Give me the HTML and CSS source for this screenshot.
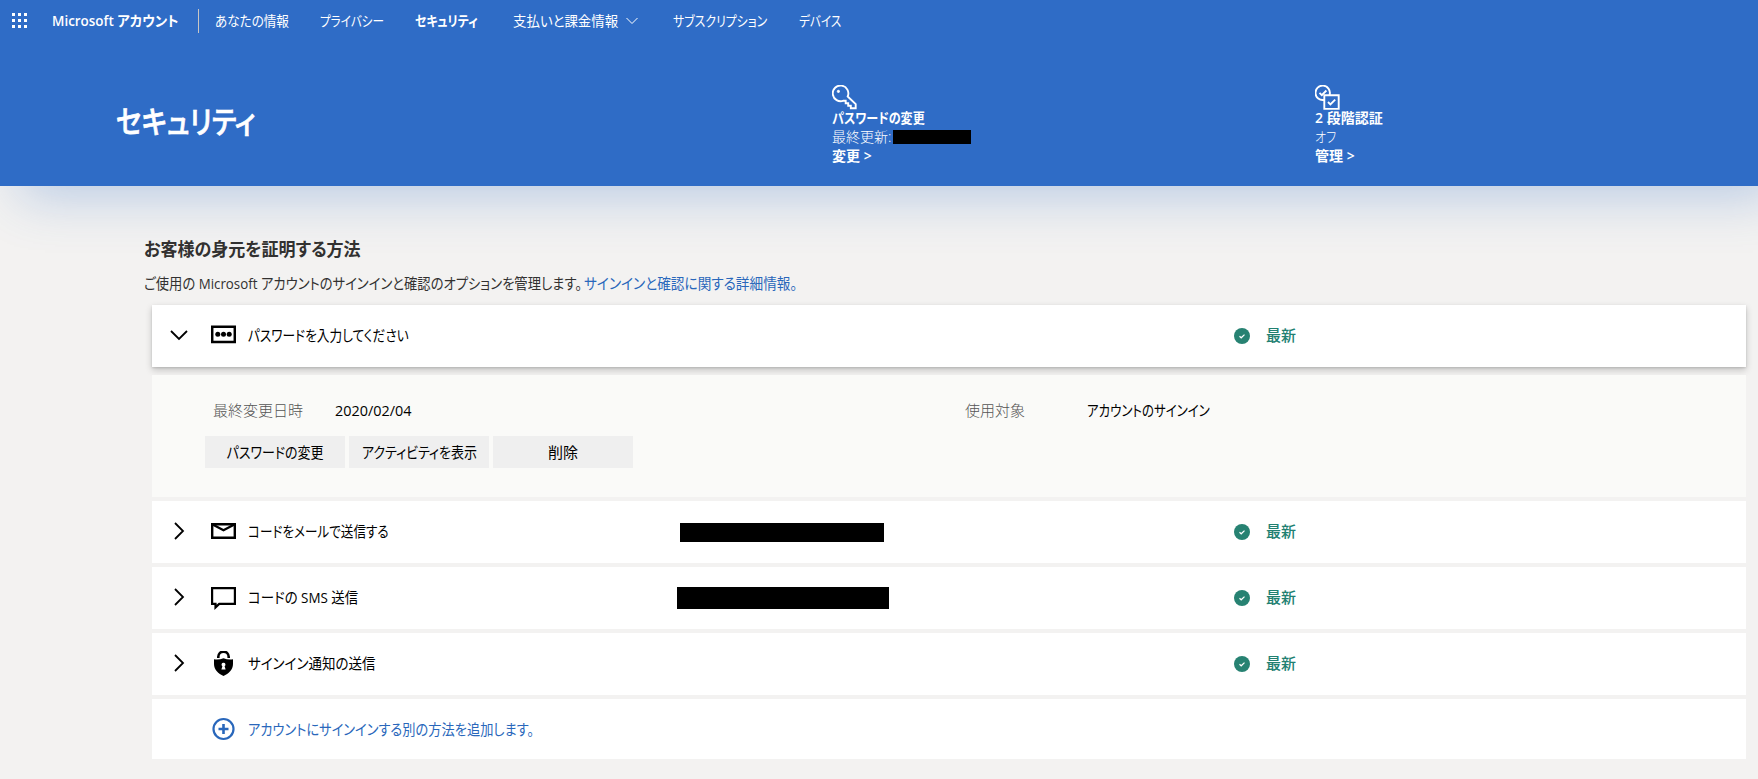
FILE: index.html
```
<!DOCTYPE html>
<html lang="ja">
<head>
  <meta charset="UTF-8" />
  <title>Microsoft アカウント | セキュリティ</title>
  <link rel="stylesheet" href="styles.css">
</head>
<body>
  <header class="header">
    <nav class="nav">
      <svg class="waffle" width="16" height="16" viewBox="0 0 16 16" fill="#fff">
        <path d="M0 0h3v3H0zM6 0h3v3H6zM12 0h3v3h-3zM0 6h3v3H0zM6 6h3v3H6zM12 6h3v3h-3zM0 12h3v3H0zM6 12h3v3H6zM12 12h3v3h-3z" />
      </svg>
      <div class="brand"><span class="t-brand">Microsoft アカウント</span></div>
      <div class="nav-item info"><span>あなたの情報</span></div>
      <div class="nav-item privacy"><span>プライバシー</span></div>
      <div class="nav-item security active"><span>セキュリティ</span></div>
      <div class="nav-item payment">
        <span>支払いと課金情報</span>
        <svg width="12" height="8" viewBox="0 0 12 8" fill="none" stroke="#fff"><path d="M.5 1 6 6.5 11.5 1" /></svg>
      </div>
      <div class="nav-item subs"><span>サブスクリプション</span></div>
      <div class="nav-item device"><span>デバイス</span></div>
    </nav>

    <div class="hero">
      <h1><span class="t-title">セキュリティ</span></h1>
      <div class="hero-card">
        <svg width="25" height="25" viewBox="0 0 25 25" fill="none" stroke="#fff" stroke-width="1.9">
          <path d="M15.7 11.5a7.8 7.8 0 1 0-4.2 4.1l2.2.1v2.5h2.5v2.5h2.6v2.6h4.9v-4.2z" />
          <circle cx="6.4" cy="6.4" r="1.1" fill="#fff" stroke-width="1" />
        </svg>
        <strong class="t-change">パスワードの変更</strong>
        <span class="line"><span class="t-updated">最終更新:</span><span class="redacted small"></span></span>
        <strong>変更 &gt;</strong>
      </div>
      <div class="hero-card">
        <svg width="25" height="25" viewBox="0 0 25 25" fill="none" stroke="#fff" stroke-width="1.9">
          <path d="M9 14.9a7.2 7.2 0 1 1 5.7-5.5M9.3 10.3h14.4v13.6H9.3z" />
          <path d="M4.5 7.8l2.3 2.3 4.6-4.6M13 17l2.4 2.4 4.8-4.8" />
        </svg>
        <strong>2 段階認証</strong>
        <span class="line"><span class="t-off">オフ</span></span>
        <strong>管理 &gt;</strong>
      </div>
    </div>
  </header>

  <main class="main">
    <h2><span class="t-heading">お客様の身元を証明する方法</span></h2>
    <p class="intro"><span class="t-intro">ご使用の Microsoft アカウントのサインインと確認のオプションを管理します。</span><a class="t-more">サインインと確認に関する詳細情報。</a></p>

    <div class="rows">
      <div class="row open">
        <svg class="chevron" width="18" height="18" viewBox="0 0 18 18"><path d="M1 5l8 8 8-8" /></svg>
        <svg class="icon" width="25" height="24" viewBox="0 0 25 24">
          <path d="M1.2 2.7h22.6v15.2H1.2z" fill="none" stroke="#000" stroke-width="2.5" />
          <circle cx="6.8" cy="10.3" r="2.5" /><circle cx="12.5" cy="10.3" r="2.5" /><circle cx="18.2" cy="10.3" r="2.5" />
        </svg>
        <div class="name"><span class="t-pass">パスワードを入力してください</span></div>
        <div class="value"></div>
        <div class="status"><svg width="16" height="16" viewBox="0 0 16 16"><circle cx="8" cy="8" r="8" /><path d="M5.5 8.2l1.7 1.6 3.3-3.2" /></svg><span>最新</span></div>
      </div>

      <div class="detail">
        <div class="facts">
          <span class="label">最終変更日時</span>
          <span class="t-date">2020/02/04</span>
          <span class="label">使用対象</span>
          <span class="t-use">アカウントのサインイン</span>
        </div>
        <div class="actions">
          <button><span class="t-btn1">パスワードの変更</span></button>
          <button><span class="t-btn2">アクティビティを表示</span></button>
          <button><span>削除</span></button>
        </div>
      </div>

      <div class="row">
        <svg class="chevron" width="18" height="18" viewBox="0 0 18 18"><path d="M5 1l8 8-8 8" /></svg>
        <svg class="icon" width="25" height="24" viewBox="0 0 25 24" fill="none" stroke="#000" stroke-width="2.4">
          <path d="M1.2 4.2h22.6v13.6H1.2z" /><path d="M1.2 4.2l11.3 6 11.3-6" />
        </svg>
        <div class="name"><span class="t-mail">コードをメールで送信する</span></div>
        <div class="value"><span class="redacted mail"></span></div>
        <div class="status"><svg width="16" height="16" viewBox="0 0 16 16"><circle cx="8" cy="8" r="8" /><path d="M5.5 8.2l1.7 1.6 3.3-3.2" /></svg><span>最新</span></div>
      </div>

      <div class="row">
        <svg class="chevron" width="18" height="18" viewBox="0 0 18 18"><path d="M5 1l8 8-8 8" /></svg>
        <svg class="icon" width="25" height="24" viewBox="0 0 25 24" fill="none" stroke="#000" stroke-width="2.2">
          <path d="M1.1 2.1h22.8v15.8H8.2l-3.7 3.5v-3.5H1.1z" />
        </svg>
        <div class="name"><span class="t-sms">コードの SMS 送信</span></div>
        <div class="value"><span class="redacted phone"></span></div>
        <div class="status"><svg width="16" height="16" viewBox="0 0 16 16"><circle cx="8" cy="8" r="8" /><path d="M5.5 8.2l1.7 1.6 3.3-3.2" /></svg><span>最新</span></div>
      </div>

      <div class="row">
        <svg class="chevron" width="18" height="18" viewBox="0 0 18 18"><path d="M5 1l8 8-8 8" /></svg>
        <svg class="icon" width="25" height="26" viewBox="0 0 25 26">
          <path d="M7.3 7V5.800a5.200 5.200 0 0 1 10.400 0V7" fill="none" stroke="#000" stroke-width="2.6" />
          <path d="M12.5 7.2c3 1.3 6.2 1.6 9.5 1.1v4.700c0 5.800-4.400 9.800-9.500 12-5.100-2.200-9.500-6.200-9.500-12V8.300c3.300.5 6.500.2 9.500-1.100z" />
          <path d="M12.5 11.7a1.900 1.900 0 0 1 1.100 3.500l1 3.300h-4.200l1-3.300a1.900 1.900 0 0 1 1.100-3.500z" fill="#fff" />
        </svg>
        <div class="name"><span class="t-notify">サインイン通知の送信</span></div>
        <div class="value"></div>
        <div class="status"><svg width="16" height="16" viewBox="0 0 16 16"><circle cx="8" cy="8" r="8" /><path d="M5.5 8.2l1.7 1.6 3.3-3.2" /></svg><span>最新</span></div>
      </div>

      <div class="row add">
        <svg class="icon" width="25" height="24" viewBox="0 0 25 24" fill="none" stroke="#2967bb" stroke-width="2.2">
          <circle cx="12.5" cy="12" r="10" /><path d="M7.5 12h10M12.5 7v10" stroke-width="2.6" />
        </svg>
        <div class="name"><span class="t-add">アカウントにサインインする別の方法を追加します。</span></div>
      </div>
    </div>
  </main>
</body>
</html>
```
FILE: styles.css
```
* {
  box-sizing: border-box;
}

body {
  margin: 0;
  height: 779px;
  overflow: hidden;
  background: #f3f2f1;
  color: #000;
  font-family: "Open Sans", "Noto Sans CJK JP", sans-serif;
  font-size: 15px;
  font-feature-settings: "palt";
  line-height: 20px;
  white-space: nowrap;
}

[class^="t-"],
.nav-item > span {
  display: inline-block;
  width: max-content;
  transform-origin: left center;
}

.t-brand { transform: scaleX(0.96); }
.info > span { transform: scaleX(0.9); }
.privacy > span { transform: scaleX(0.83); }
.security > span { transform: scaleX(0.85); }
.payment > span { transform: scaleX(0.96); }
.subs > span { transform: scaleX(0.85); }
.device > span { transform: scaleX(0.83); }
.t-title { transform: scaleX(0.87); }
.t-change { transform: scaleX(0.86); }
.t-off { transform: scaleX(0.86); }
.t-heading { transform: scaleX(0.945); }
.t-intro { transform: scaleX(0.888); }
.t-more { transform: scaleX(0.91); }
.t-pass { transform: scaleX(0.845); }
.t-date { transform: scaleX(0.96); }
.t-use { transform: scaleX(0.83); }
.t-mail { transform: scaleX(0.84); }
.t-sms { transform: scaleX(0.895); }
.t-notify { transform: scaleX(0.9); }
.t-add { transform: scaleX(0.882); }

.header {
  height: 186px;
  background: #2f6cc6;
  color: #fff;
  box-shadow: 20px 10px 50px rgba(47, 108, 198, 0.3);
}

.nav {
  display: flex;
  align-items: center;
  height: 42px;
  padding-left: 12px;
  font-size: 14px;
}

.waffle {
  margin-right: 24px;
}

.brand {
  width: 147px;
  height: 24px;
  line-height: 24px;
  margin-right: 16px;
  border-right: 1px solid #c8c6c4;
  font-weight: 600;
}

.nav-item {
  display: flex;
  align-items: center;
  gap: 3px;
}

.info { width: 105px; }
.privacy { width: 95px; }
.security { width: 98px; }
.payment { width: 160px; }
.payment > span { width: 110px; }
.subs { width: 126px; }

.active {
  font-weight: 600;
}

.hero {
  display: grid;
  grid-template-columns: 716px 483px 1fr;
  padding: 43px 0 0 116px;
  font-size: 14px;
  line-height: 19px;
}

.hero h1 {
  margin: 16px 0 0;
  font-size: 31px;
  font-weight: 500;
  line-height: 40px;
  -webkit-text-stroke: 0.7px #fff;
}

.hero-card {
  display: flex;
  flex-direction: column;
  align-items: flex-start;
}

.hero-card svg {
  margin-bottom: -2px;
}

.hero-card strong {
  font-weight: 600;
}

.line {
  display: flex;
  align-items: center;
  font-weight: 300;
}

.line .t-updated {
  width: 61px;
}

.redacted {
  display: block;
  background: #000;
}

.small { width: 78px; height: 14px; }
.mail { width: 204px; height: 19px; margin-left: 2px; }
.phone { width: 212px; height: 22px; margin-left: -1px; }

.main {
  padding: 51px 12px 0 144px;
}

h2 {
  margin: 0;
  font-size: 18px;
  font-weight: 600;
  line-height: 24px;
  color: #323130;
}

.intro {
  display: flex;
  margin: 12px 0;
  color: #323130;
}

.intro a {
  color: #2967bb;
}

.intro .t-intro {
  width: 491px;
  margin-right: -51px;
}

.rows {
  display: flex;
  flex-direction: column;
  gap: 4px;
  margin-left: 8px;
}

.row {
  display: flex;
  align-items: center;
  height: 62px;
  padding-left: 18px;
  background: #fff;
}

.row.open {
  margin-bottom: 4px;
  box-shadow: 0 3px 7px rgba(0, 0, 0, 0.2), 0 1px 2px rgba(0, 0, 0, 0.12);
}

.chevron {
  margin: 0 23px 2px 0;
  fill: none;
  stroke: #000;
  stroke-width: 1.8;
}

.icon {
  flex: none;
  margin-right: 12px;
}

.name {
  width: 430px;
  padding-bottom: 2px;
}

.value {
  width: 556px;
}

.status {
  display: flex;
  align-items: center;
  gap: 16px;
  color: #218071;
  font-weight: 500;
}

.status span {
  padding-bottom: 2px;
}

.status circle {
  fill: #278272;
}

.status path {
  fill: none;
  stroke: #fff;
  stroke-width: 1.2;
}

.detail {
  height: 122px;
  padding: 25px 0 0 53px;
  background: #fafaf8;
}

.facts {
  display: grid;
  grid-template-columns: 122px 630px 122px 1fr;
  padding-left: 8px;
}

.label {
  color: #555;
  font-weight: 300;
}

.actions {
  display: flex;
  gap: 4px;
  margin-top: 16px;
}

button {
  display: flex;
  align-items: center;
  justify-content: center;
  width: 140px;
  height: 32px;
  padding: 0;
  border: none;
  background: #efefef;
  color: #000;
  font: inherit;
  font-feature-settings: inherit;
  white-space: nowrap;
}

.t-btn1,
.t-btn2 {
  transform: scaleX(0.865);
  transform-origin: center;
}

.add {
  height: 60px;
  padding-left: 59px;
}

.add .name {
  padding-bottom: 0;
  color: #2967bb;
}
```
